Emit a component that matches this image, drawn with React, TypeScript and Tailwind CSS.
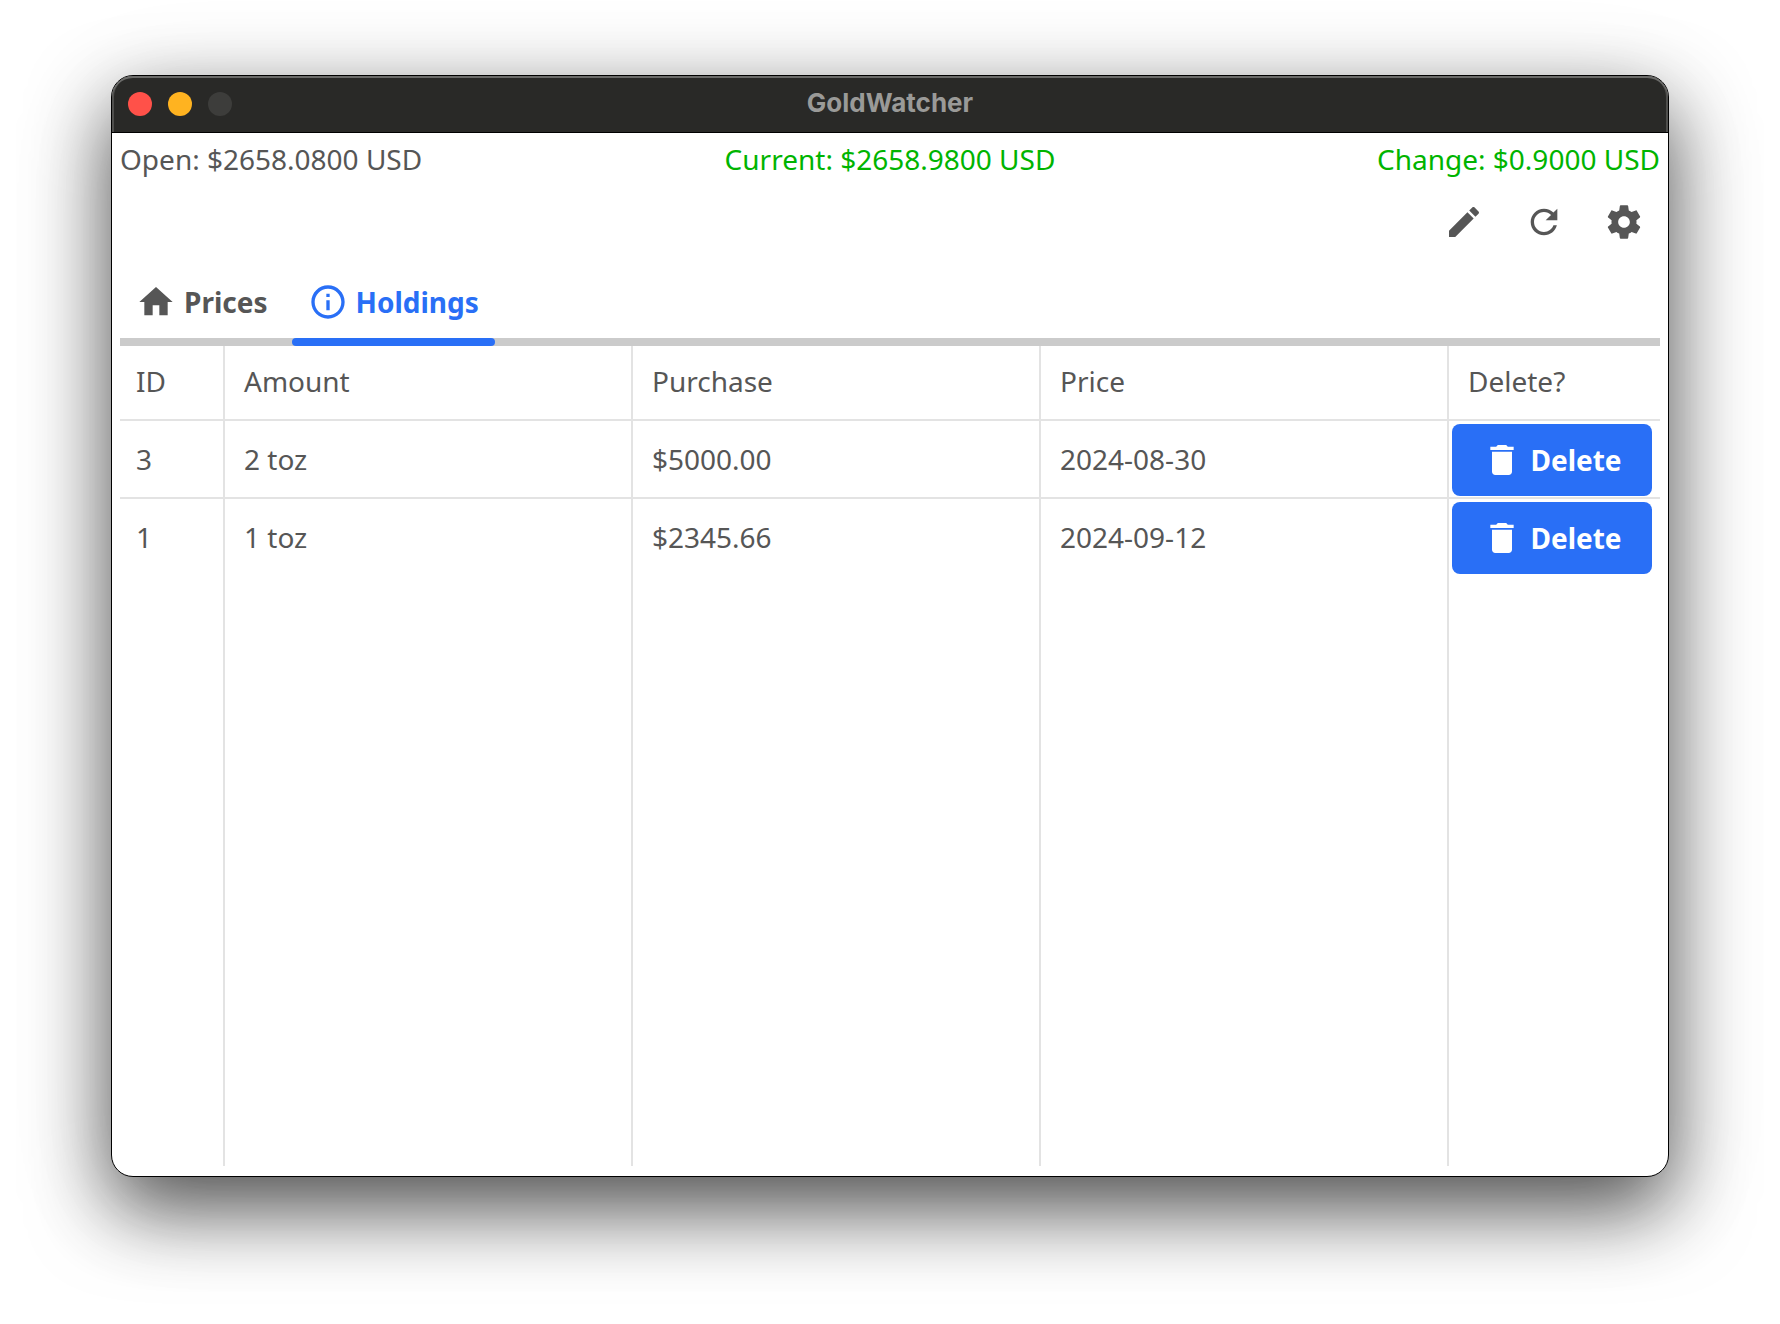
import React from "react";

const icons = {
  home: "M10 20v-6h4v6h5v-8h3L12 3 2 12h3v8z",
  info: "M11 7h2v2h-2zm0 4h2v6h-2zm1-9C6.48 2 2 6.48 2 12s4.48 10 10 10 10-4.48 10-10S17.52 2 12 2zm0 18c-4.41 0-8-3.59-8-8s3.59-8 8-8 8 3.59 8 8-3.59 8-8 8z",
  edit: "M3 17.25V21h3.75L17.81 9.94l-3.75-3.75L3 17.25zM20.71 7.04c.39-.39.39-1.02 0-1.41l-2.34-2.34c-.39-.39-1.02-.39-1.41 0l-1.83 1.83 3.75 3.75 1.83-1.83z",
  refresh:
    "M17.65 6.35C16.2 4.9 14.21 4 12 4c-4.42 0-7.99 3.58-7.99 8s3.57 8 7.99 8c3.73 0 6.84-2.55 7.73-6h-2.08c-.82 2.33-3.04 4-5.65 4-3.31 0-6-2.69-6-6s2.69-6 6-6c1.66 0 3.14.69 4.22 1.78L13 11h7V4l-2.35 2.35z",
  settings:
    "M19.43 12.98c.04-.32.07-.64.07-.98s-.03-.66-.07-.98l2.11-1.65c.19-.15.24-.42.12-.64l-2-3.46c-.12-.22-.39-.3-.61-.22l-2.49 1c-.52-.4-1.08-.73-1.69-.98l-.38-2.65C14.46 2.18 14.25 2 14 2h-4c-.25 0-.46.18-.49.42l-.38 2.65c-.61.25-1.17.59-1.69.98l-2.49-1c-.23-.09-.49 0-.61.22l-2 3.46c-.13.22-.07.49.12.64l2.11 1.65c-.04.32-.07.65-.07.98s.03.66.07.98l-2.11 1.65c-.19.15-.24.42-.12.64l2 3.46c.12.22.39.3.61.22l2.49-1c.52.4 1.08.73 1.69.98l.38 2.65c.03.24.24.42.49.42h4c.25 0 .46-.18.49-.42l.38-2.65c.61-.25 1.17-.59 1.69-.98l2.49 1c.23.09.49 0 .61-.22l2-3.46c.12-.22.07-.49-.12-.64l-2.11-1.65zM12 15.5c-1.93 0-3.5-1.57-3.5-3.5s1.57-3.5 3.5-3.5 3.5 1.57 3.5 3.5-1.57 3.5-3.5 3.5z",
  trash: "M6 19c0 1.1.9 2 2 2h8c1.1 0 2-.9 2-2V7H6v12zM19 4h-3.5l-1-1h-5l-1 1H5v2h14V4z",
};

function Icon({ name }: { name: keyof typeof icons }) {
  return (
    <svg viewBox="0 0 24 24" className="size-10 shrink-0 fill-current" aria-hidden="true">
      <path d={icons[name]} />
    </svg>
  );
}

const holdings = [
  { id: 3, amount: "2 toz", purchase: "$5000.00", price: "2024-08-30" },
  { id: 1, amount: "1 toz", purchase: "$2345.66", price: "2024-09-12" },
];

const line = "border-[#e3e3e3]";

function TitleBar() {
  return (
    <header className="grid h-[57px] grid-cols-[1fr_auto_1fr] items-center rounded-t-[21px] border-b border-black bg-[#292927] px-4 shadow-[inset_0_2px_0_#6b6b69,inset_2px_0_0_#4f4f4d,inset_-2px_0_0_#4f4f4d]">
      <div className="flex gap-4">
        <button aria-label="Close" className="size-6 rounded-full bg-[#ff5149]" />
        <button aria-label="Minimize" className="size-6 rounded-full bg-[#ffb320]" />
        <button aria-label="Zoom" disabled className="size-6 rounded-full bg-[#3d3d3b]" />
      </div>
      <h1 className="pb-0.5 font-['Inter',sans-serif] text-[26px] leading-8 font-bold text-[#9a9a98]">GoldWatcher</h1>
    </header>
  );
}

function HoldingsTable() {
  return (
    <table className="h-full w-full table-fixed border-separate border-spacing-0 text-left">
      <colgroup>
        <col className="w-[105px]" />
        <col />
        <col />
        <col />
        <col className="w-[211px]" />
      </colgroup>
      <thead>
        <tr className="h-[75px]">
          <th className={`border-r-2 border-b-2 px-4 pb-1 font-normal ${line}`}>ID</th>
          <th className={`border-r-2 border-b-2 px-[19px] pb-1 font-normal ${line}`}>Amount</th>
          <th className={`border-r-2 border-b-2 px-[19px] pb-1 font-normal ${line}`}>Purchase</th>
          <th className={`border-r-2 border-b-2 px-[19px] pb-1 font-normal ${line}`}>Price</th>
          <th className={`border-b-2 px-[19px] pb-1 font-normal ${line}`}>Delete?</th>
        </tr>
      </thead>
      <tbody>
        {holdings.map((h, i) => {
          const last = i === holdings.length - 1;
          const edge = last ? "pb-0.5" : "border-b-2";
          return (
            <tr key={h.id} className="h-[78px]">
              <td className={`border-r-2 px-4 ${line} ${edge}`}>{h.id}</td>
              <td className={`border-r-2 px-[19px] ${line} ${edge}`}>{h.amount}</td>
              <td className={`border-r-2 px-[19px] ${line} ${edge}`}>{h.purchase}</td>
              <td className={`border-r-2 px-[19px] ${line} ${edge}`}>{h.price}</td>
              <td className={`pt-[3px] pr-2 pl-[3px] ${line} ${last ? "pb-[3px]" : "border-b-2 pb-px"}`}>
                <button className="flex h-[72px] w-full items-center justify-center gap-2 rounded-lg bg-[#296ff6] font-bold text-white">
                  <Icon name="trash" />
                  Delete
                </button>
              </td>
            </tr>
          );
        })}
        <tr aria-hidden="true">
          <td className={`border-r-2 ${line}`} />
          <td className={`border-r-2 ${line}`} />
          <td className={`border-r-2 ${line}`} />
          <td className={`border-r-2 ${line}`} />
          <td />
        </tr>
      </tbody>
    </table>
  );
}

export default function App() {
  return (
    <div className="flex min-h-screen flex-col bg-white px-[111px] pt-[75px] pb-[147px]">
      <main className="flex grow flex-col rounded-[22px] border border-black bg-white font-['Noto_Sans',sans-serif] text-[28px] leading-10 text-[#565656] shadow-[0_32px_80px_rgba(0,0,0,0.66),0_20px_110px_rgba(0,0,0,0.1)]">
        <TitleBar />
        <div className="flex grow flex-col px-2 pb-[10px]">
          <div className="grid grid-cols-[1fr_auto_1fr] pt-1.5">
            <p>Open: $2658.0800 USD</p>
            <p className="text-[#00b400]">Current: $2658.9800 USD</p>
            <p className="text-right text-[#00b400]">Change: $0.9000 USD</p>
          </div>
          <div className="flex justify-end gap-10 px-4 pt-[23px]">
            <button aria-label="Add holding"><Icon name="edit" /></button>
            <button aria-label="Refresh"><Icon name="refresh" /></button>
            <button aria-label="Settings"><Icon name="settings" /></button>
          </div>
          <div role="tablist" className="mt-6 flex h-20 gap-2 bg-[linear-gradient(#cbcbcb,#cbcbcb)] bg-[length:100%_8px] bg-bottom bg-no-repeat font-bold">
            <button role="tab" aria-selected="false" className="flex flex-col">
              <span className="flex h-[72px] items-center gap-2 px-4"><Icon name="home" />Prices</span>
            </button>
            <button role="tab" aria-selected="true" className="flex flex-col text-[#296ff6]">
              <span className="flex h-[72px] items-center gap-2 px-4"><Icon name="info" />Holdings</span>
              <span className="h-2 w-full rounded-full bg-[#296ff6]" />
            </button>
          </div>
          <div className="grid grow">
            <HoldingsTable />
          </div>
        </div>
      </main>
    </div>
  );
}
